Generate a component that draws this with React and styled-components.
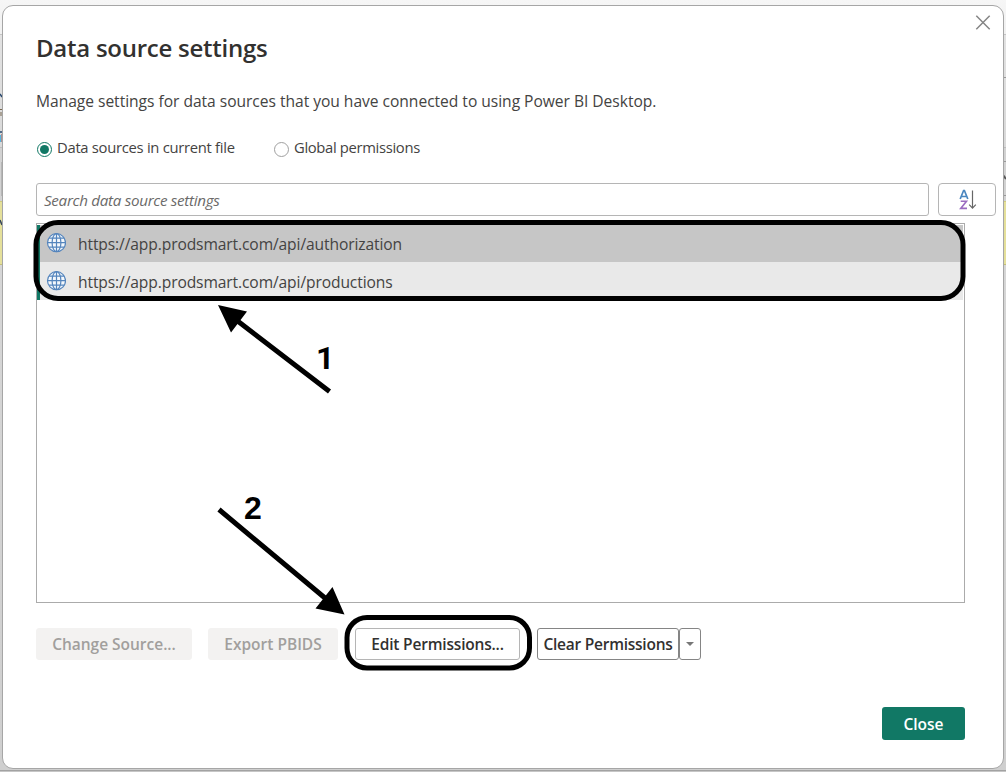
import React from 'react';
import styled, { createGlobalStyle } from 'styled-components';

const GlobalStyle = createGlobalStyle`
  * { box-sizing: border-box; }
  body { margin: 0; overflow: hidden; }
  button { font: inherit; margin: 0; padding: 0; }
`;

const Page = styled.div`
  position: relative;
  width: 1006px;
  height: 772px;
  padding: 5px 2px 3px;
  overflow: hidden;
  font-family: "Open Sans", "Noto Sans", sans-serif;
  font-size: 15.6px;
  color: #444342;
  background: linear-gradient(
    #f6f6f6 0, #f0f0f0 34px, #c4c4c4 34px, #c4c4c4 35px, #e2e2e2 35px, #d9d9d9 147px,
    #bdbdbd 147px, #bdbdbd 148px, #d2d2d2 148px, #d2d2d2 201px,
    #d0cb7c 201px, #d0cb7c 202px, #e5e09a 202px, #e5e09a 264px, #c4bf7a 264px, #c4bf7a 265px,
    #d6d6d6 265px, #cfcfcf 770px, #a2a2a2 770px, #a2a2a2 771px, #c6c6c6 771px
  );
`;

const Backdrop = styled.svg`
  position: absolute;
  left: 0;
  top: 0;
`;

const Dialog = styled.main`
  position: relative;
  display: flex;
  flex-direction: column;
  width: 1002px;
  height: 764px;
  padding: 26px 38px 28px 33px;
  border: 1px solid #a6a6a6;
  border-radius: 11px;
  background: #fff;
`;

const Dismiss = styled.button`
  position: absolute;
  top: 8px;
  right: 12px;
  width: 16px;
  height: 16px;
  border: 0;
  background: none;
  svg { display: block; }
`;

const Label = styled.span`
  white-space: nowrap;
  letter-spacing: ${(p) => p.$track || 0}px;
`;

const Title = styled.h1`
  margin: 0;
  height: 32px;
  font-size: 24px;
  line-height: 32px;
  font-weight: 600;
  color: #323130;
`;

const Intro = styled.p`
  margin: 26px 0 0;
  height: 22px;
  line-height: 22px;
`;

const RadioGroup = styled.div`
  display: flex;
  margin-top: 25px;
  height: 22px;
  line-height: 22px;
  font-size: 14.8px;
`;

const RadioOption = styled.label`
  display: flex;
  align-items: center;
  gap: 5px;
  width: ${(p) => p.$width}px;
  ${Label} { margin-top: -2px; }
`;

const RadioMark = styled.span`
  display: grid;
  place-items: center;
  flex: none;
  width: 15px;
  height: 15px;
  margin-top: 3px;
  margin-left: 1px;
  border: 1px solid ${(p) => (p.$checked ? '#117865' : '#a0a0a0')};
  border-radius: 50%;
  &::after {
    content: '';
    width: 9px;
    height: 9px;
    border-radius: 50%;
    background: ${(p) => (p.$checked ? '#117865' : 'transparent')};
  }
`;

const SearchRow = styled.div`
  display: flex;
  gap: 9px;
  width: 960px;
  height: 33px;
  margin-top: 24px;
`;

const SearchBox = styled.div`
  width: 893px;
  padding-left: 7px;
  border: 1px solid #b5b5b5;
  border-radius: 3px;
  line-height: 33px;
  font-size: 15.2px;
  font-style: italic;
  color: #6b6a69;
`;

const SortButton = styled.button`
  display: grid;
  place-items: center;
  width: 58px;
  border: 1px solid #b5b5b5;
  border-radius: 4px;
  background: #fff;
`;

const SourceList = styled.div`
  width: 929px;
  height: 380px;
  margin-top: 7px;
  padding: 1px;
  border: 1px solid #ababab;
`;

const SourceRow = styled.div`
  display: flex;
  align-items: center;
  height: ${(p) => (p.$selected ? 37 : 38)}px;
  padding: ${(p) => (p.$selected ? 1 : 2)}px 0 0 6px;
  border-left: 3px solid #117865;
  margin-left: -1px;
  background: ${(p) => (p.$selected ? '#c6c6c6' : '#e9e9e9')};
  svg { display: block; flex: none; margin-right: 12px; margin-top: -3px; }
`;

const Actions = styled.div`
  display: flex;
  height: 32px;
  margin-top: 25px;
`;

const ActionButton = styled.button`
  width: ${(p) => p.$width}px;
  height: 32px;
  margin-right: ${(p) => p.$gap || 0}px;
  border: 1px solid ${(p) => (p.disabled ? '#f3f2f1' : p.$strong ? '#858585' : '#b5b5b5')};
  border-radius: 3px;
  background: ${(p) => (p.disabled ? '#f3f2f1' : '#fff')};
  color: ${(p) => (p.disabled ? '#a19f9d' : '#323130')};
  font-size: 15.5px;
  font-weight: 600;
  display: flex;
  align-items: center;
  justify-content: center;
`;

const Footer = styled.footer`
  display: flex;
  justify-content: flex-end;
  margin-top: auto;
`;

const CloseButton = styled.button`
  width: 83px;
  height: 33px;
  border: 0;
  border-radius: 3px;
  background: #117865;
  color: #fff;
  font-size: 15.5px;
  font-weight: 600;
`;

const Annotations = styled.svg`
  position: absolute;
  left: 0;
  top: 0;
  pointer-events: none;
`;

const StepNumber = styled.span`
  position: absolute;
  left: ${(p) => p.$x}px;
  top: ${(p) => p.$y}px;
  font: bold 32px/36px ${(p) => p.$family}, sans-serif;
  color: #000;
`;

const Globe = () => (
  <svg width="20" height="20" viewBox="0 0 20 20" fill="none" stroke="#5585bd" strokeWidth="1.2">
    <circle cx="10.500" cy="9.700" r="9" fill="#f4f8fc" />
    <ellipse cx="10.500" cy="9.700" rx="4.400" ry="9" />
    <path d="M10.500 .7v18M1.500 9.700h18M3.100 5.200h14.800M3.100 14.200h14.800" />
  </svg>
);

const SortIcon = () => (
  <svg width="19" height="22" viewBox="0 0 19 22" fill="none">
    <path d="M2.200 10 5.600 1.500h.8L9.800 10M3.400 7.500h5.200" stroke="#4a86bf" strokeWidth="1.700" />
    <path d="M2.700 12.200h5.800L2.700 19.400h6.300" stroke="#9b6cc0" strokeWidth="1.600" />
    <path d="M14.500 1.500v17.500M11.200 15.700l3.300 3.500 3.300-3.500" stroke="#666" strokeWidth="1.200" />
  </svg>
);

export default function App() {
  return (
    <Page>
      <GlobalStyle />
      <Backdrop width="1006" height="772" fill="none">
        <path d="M0 94l2 3M0 132h2" stroke="#27476e" strokeWidth="1.500" />
        <path d="M0 109.500h2M1 112v4" stroke="#77674f" />
        <path d="M.5 135v7" stroke="#58b7df" />
        <path d="M2 134v8" stroke="#84454b" />
        <path d="M0 220l2 5" stroke="#34435a" strokeWidth="1.500" />
        <path d="M1 162h1v34h-1z" fill="#b7b7b7" />
        <path d="M1003 175l3 4" stroke="#555" strokeWidth="2" />
        <path d="M1003 77.500h3M1003 161.500h3M1003 195.500h3" stroke="#999" />
      </Backdrop>
      <Dialog>
        <Dismiss aria-label="Close dialog">
          <svg width="16" height="16" stroke="#858585" strokeWidth="1.500">
            <path d="M1.300 1.800l13.400 13.400M14.700 1.800l-13.400 13.400" />
          </svg>
        </Dismiss>
        <Title><Label $track={-0.25}>Data source settings</Label></Title>
        <Intro><Label $track={-0.03}>Manage settings for data sources that you have connected to using Power BI Desktop.</Label></Intro>
        <RadioGroup>
          <RadioOption $width={237}><RadioMark $checked /><Label $track={-0.29}>Data sources in current file</Label></RadioOption>
          <RadioOption><RadioMark /><Label $track={-0.34}>Global permissions</Label></RadioOption>
        </RadioGroup>
        <SearchRow>
          <SearchBox><Label $track={-0.3}>Search data source settings</Label></SearchBox>
          <SortButton aria-label="Sort"><SortIcon /></SortButton>
        </SearchRow>
        <SourceList>
          <SourceRow $selected><Globe /><Label $track={-0.11}>https://app.prodsmart.com/api/authorization</Label></SourceRow>
          <SourceRow><Globe /><Label $track={-0.11}>https://app.prodsmart.com/api/productions</Label></SourceRow>
        </SourceList>
        <Actions>
          <ActionButton disabled $width={156} $gap={16}><Label $track={-0.02}>Change Source...</Label></ActionButton>
          <ActionButton disabled $width={130} $gap={17}><Label>Export PBIDS</Label></ActionButton>
          <ActionButton $width={165} $gap={17}><Label $track={-0.19}>Edit Permissions...</Label></ActionButton>
          <ActionButton $width={142} $strong><Label $track={-0.25}>Clear Permissions</Label></ActionButton>
          <ActionButton $width={22} $strong aria-label="More clear options">
            <svg width="8" height="4"><path d="M0 0h8L4 4z" fill="#777" /></svg>
          </ActionButton>
        </Actions>
        <Footer><CloseButton><Label>Close</Label></CloseButton></Footer>
      </Dialog>
      <Annotations width="1006" height="772">
        <rect x="36" y="222.500" width="927" height="76" rx="22" fill="none" stroke="#000" strokeWidth="5" />
        <rect x="347" y="617.500" width="182.500" height="50.500" rx="20" fill="none" stroke="#000" strokeWidth="5" />
        <path d="M329.500 391.500L235 319M219 509.500L325 598" stroke="#000" strokeWidth="5" />
        <path d="M218 305l29 6.500-16 21zM344.500 614.500l-29-6 17-21.500z" />
      </Annotations>
      <StepNumber $x={316} $y={340} $family="Roboto">1</StepNumber>
      <StepNumber $x={244} $y={490} $family={'"Liberation Sans"'}>2</StepNumber>
    </Page>
  );
}
